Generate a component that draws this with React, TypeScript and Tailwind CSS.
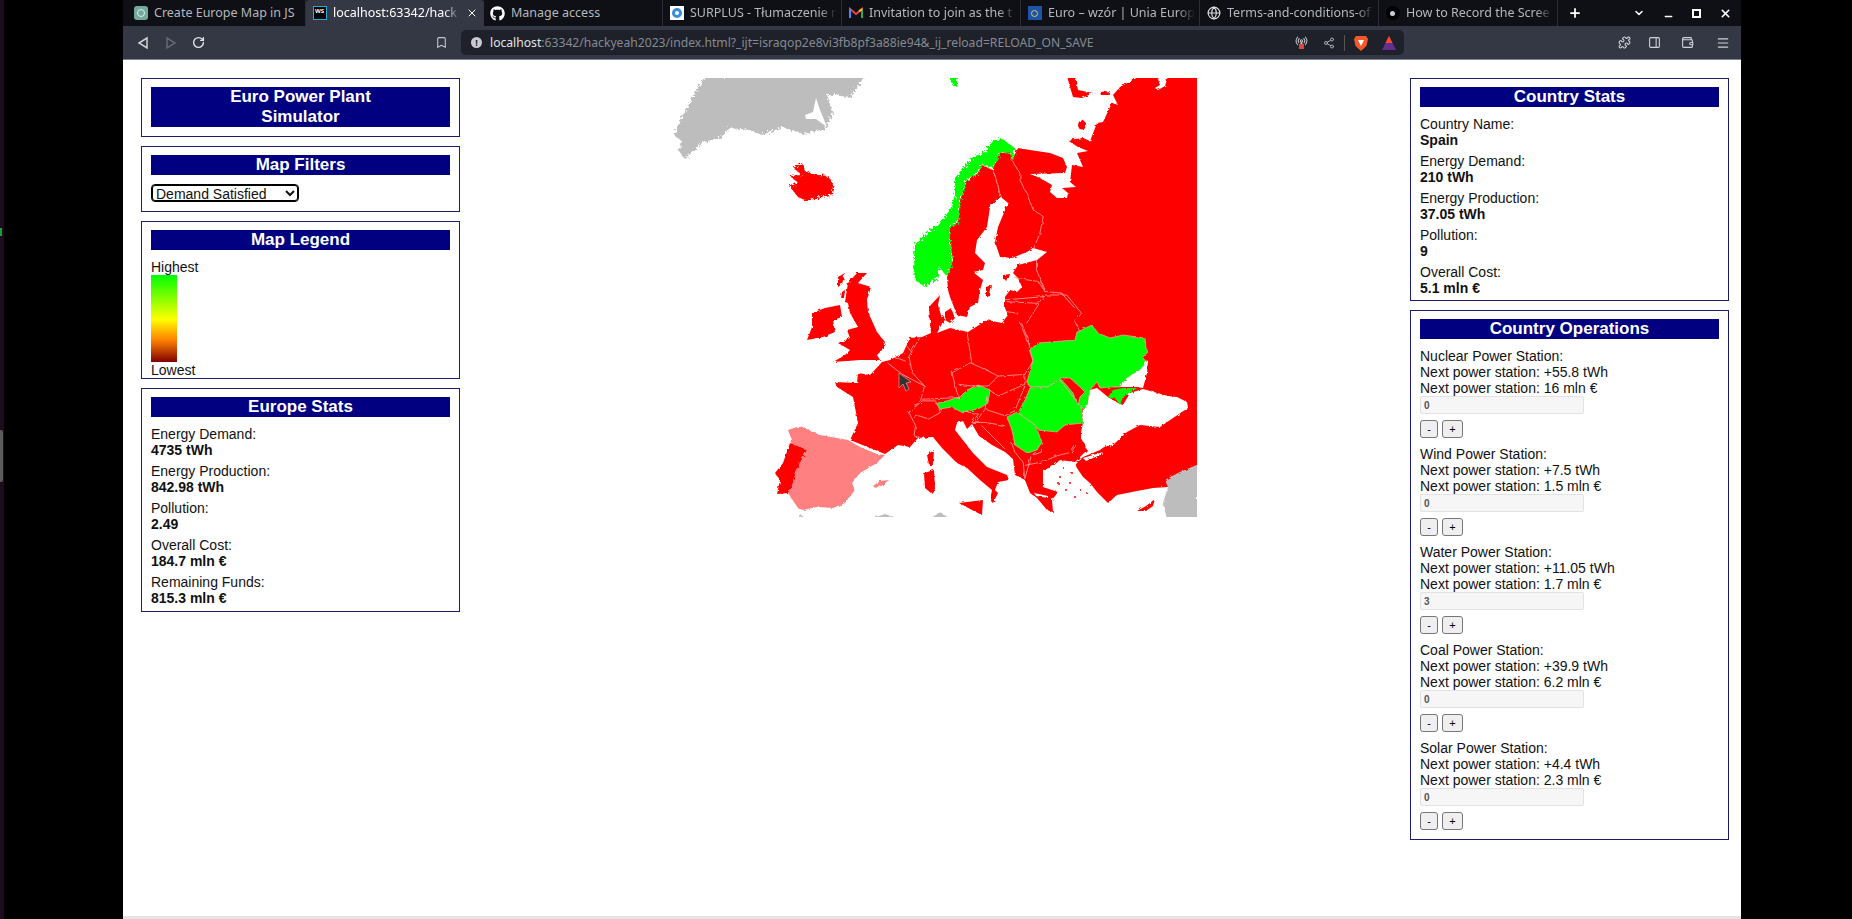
import { FaGithub } from 'react-icons/fa';
import { Globe, Plus, X, ChevronDown, Minus, RotateCw, Bookmark, Share2, Puzzle, Menu, Wallet, PanelRight, RadioTower } from 'lucide-react';

const MAP_FONT = "font-['Liberation_Sans',sans-serif]";
const LINE = '#ffa8a8';

function ChatIcon() {
  return (
    <div className="w-[14px] h-[14px] rounded-[3px] bg-[#74aa9c] flex items-center justify-center">
      <div className="w-[8px] h-[8px] rounded-full border border-[#dff0ea]" />
    </div>
  );
}
function WsIcon() {
  return (
    <div className="w-[14px] h-[14px] bg-black border border-[#25a9e0] text-white text-[6px] leading-[8px] font-bold text-center">
      WS
    </div>
  );
}
function PinIcon() {
  return (
    <div className="w-[14px] h-[14px] bg-white flex items-center justify-center">
      <div className="w-[10px] h-[10px] rounded-full border-[3px] border-[#3b8fd6]" />
    </div>
  );
}
function GmailIcon() {
  return (
    <svg width="14" height="12" viewBox="0 0 14 12">
      <path d="M1 11V2l6 5 6-5v9" fill="none" stroke="#e8453c" strokeWidth="2" />
      <path d="M1 11V2" stroke="#4a8af4" strokeWidth="2" />
      <path d="M13 11V2" stroke="#34a853" strokeWidth="2" />
      <path d="M10 4.500l3-2.500" stroke="#f9bb2d" strokeWidth="2" />
    </svg>
  );
}
function EuIcon() {
  return (
    <div className="w-[14px] h-[14px] bg-[#1c55a8] flex items-center justify-center">
      <div className="w-[7px] h-[7px] rounded-full border border-[#e6c84a]" />
    </div>
  );
}
function DotIcon() {
  return (
    <div className="w-[14px] h-[14px] rounded-full bg-black flex items-center justify-center">
      <div className="w-[5px] h-[5px] rounded-full bg-[#ccc]" />
    </div>
  );
}

const TABS = [
  { title: 'Create Europe Map in JS', icon: <ChatIcon /> },
  { title: 'localhost:63342/hack', icon: <WsIcon />, active: true, fade: true },
  { title: 'Manage access', icon: <FaGithub className="w-[15px] h-[15px] text-white" /> },
  { title: 'SURPLUS - Tłumaczenie n', icon: <PinIcon />, fade: true },
  { title: 'Invitation to join as the t', icon: <GmailIcon />, fade: true },
  { title: 'Euro – wzór | Unia Europ', icon: <EuIcon />, fade: true },
  { title: 'Terms-and-conditions-of', icon: <Globe className="w-[14px] h-[14px] text-[#ddd]" />, fade: true },
  { title: 'How to Record the Scree', icon: <DotIcon />, fade: true },
];

function BrowserChrome() {
  return (
    <div className="shrink-0 font-['Noto_Sans',sans-serif]">
      <div className="h-[26px] bg-[#0e1015] flex items-end pl-[4px] pr-[9px] text-[12.500px] text-[#b4b7bd]">
        {TABS.map((t) => (
          <div
            key={t.title}
            className={
              t.active
                ? 'w-[178px] h-[26px] shrink-0 bg-[#343844] text-white flex items-center gap-[6px] pl-[6px] pr-[6px] rounded-t-[3px]'
                : 'w-[179px] h-[26px] shrink-0 flex items-center gap-[6px] pl-[6px] pr-[4px] border-r border-[#2c2f38]'
            }
          >
            <span className="w-[15px] flex justify-center shrink-0">{t.icon}</span>
            <span
              className={
                t.fade
                  ? 'flex-1 overflow-hidden whitespace-nowrap [mask-image:linear-gradient(to_right,black_88%,transparent)]'
                  : 'flex-1 overflow-hidden whitespace-nowrap'
              }
            >
              {t.title}
            </span>
            {t.active && <X className="w-[12px] h-[12px] text-white shrink-0" />}
          </div>
        ))}
        <div className="h-[26px] flex items-center ml-[10px]">
          <Plus className="w-[14px] h-[14px] text-white" strokeWidth={3} />
        </div>
        <div className="h-[26px] flex-1 flex items-center justify-end gap-[18px] text-white">
          <ChevronDown className="w-[12px] h-[12px]" strokeWidth={3} />
          <Minus className="w-[11px] h-[11px] translate-y-[3px]" strokeWidth={3} />
          <div className="w-[9px] h-[9px] border-2 border-white" />
          <X className="w-[13px] h-[13px]" strokeWidth={3} />
        </div>
      </div>

      <div className="h-[34px] bg-[#343844] flex items-center text-[#c4c7cc] border-b border-[#7d8590]">
        <div className="w-[312px] shrink-0 flex items-center pl-[13px] gap-[14px]">
          <svg width="14" height="14" viewBox="0 0 14 14">
            <path d="M11 2L3 7l8 5z" fill="none" stroke="#d0d3d8" strokeWidth="1.500" />
          </svg>
          <svg width="14" height="14" viewBox="0 0 14 14">
            <path d="M3 2l8 5-8 5z" fill="none" stroke="#636873" strokeWidth="1.500" />
          </svg>
          <RotateCw className="w-[13px] h-[13px] text-[#e4e6e9]" strokeWidth={2.500} />
        </div>
        <Bookmark className="w-[13px] h-[13px] shrink-0 text-[#c4c7cc]" />
        <div className="ml-[13px] w-[943px] shrink-0 h-[25px] bg-[#1e2129] rounded-[5px] flex items-center pl-[10px] pr-[8px] text-[12.150px]">
          <div className="w-[11px] h-[11px] rounded-full bg-[#c8cbd0] text-[#1e2129] text-[9px] leading-[11px] text-center font-bold">
            !
          </div>
          <span className="ml-[8px] text-[#e2e4e8] translate-y-[1px]">localhost</span>
          <span className="text-[#858a94] translate-y-[1px]">:63342/hackyeah2023/index.html?_ijt=israqop2e8vi3fb8pf3a88ie94&_ij_reload=RELOAD_ON_SAVE</span>
          <div className="flex-1" />
          <div className="relative">
            <RadioTower className="w-[13px] h-[13px] text-[#b9bcc2]" />
            <div className="absolute left-[4px] bottom-0 w-[5px] h-[5px] bg-[#e0443e]" />
          </div>
          <Share2 className="w-[12px] h-[12px] ml-[15px] text-[#a8abb2]" />
          <div className="w-px h-[16px] bg-[#555] ml-[9px]" />
          <svg width="14" height="16" viewBox="0 0 14 16" className="ml-[9px]">
            <path d="M2 1h10l2 3-1.500 7L7 16 1.500 11 0 4z" fill="#f1592a" />
            <path d="M4 5h6L7 11z" fill="#fff" />
          </svg>
          <svg width="14" height="14" viewBox="0 0 14 14" className="ml-[14px]">
            <path d="M7 0l7 14H0z" fill="#662d91" />
            <path d="M7 0l3.500 7h-7z" fill="#ff4724" />
          </svg>
        </div>
        <div className="flex-1 flex items-center pl-[214px] gap-[17px] text-[#d0d3d8]">
          <Puzzle className="w-[13px] h-[13px] shrink-0" />
          <PanelRight className="w-[13px] h-[13px] shrink-0" />
          <Wallet className="w-[13px] h-[13px] ml-[3px] shrink-0" />
          <Menu className="w-[14px] h-[14px] ml-[5px] shrink-0" />
        </div>
      </div>
    </div>
  );
}

const GREEK_ISLANDS: [number, number][] = [
  [1060, 477], [1070, 483], [1080, 490], [1087, 493], [1063, 468], [1066, 490], [1075, 497], [1058, 483], [1091, 486], [1072, 473],
];

function EuropeMap() {
  return (
    <svg width="537" height="439" viewBox="660 78 537 439" className="shrink-0">
      <defs>
        <filter id="coast" x="0" y="0" width="100%" height="100%">
          <feTurbulence type="fractalNoise" baseFrequency="0.28" numOctaves="2" seed="4" result="n" />
          <feDisplacementMap in="SourceGraphic" in2="n" scale="3" />
          <feGaussianBlur stdDeviation="0.3" />
        </filter>
        <filter id="rough" x="0" y="0" width="100%" height="100%">
          <feTurbulence type="fractalNoise" baseFrequency="0.45" numOctaves="2" seed="9" result="n" />
          <feDisplacementMap in="SourceGraphic" in2="n" scale="7" />
          <feGaussianBlur stdDeviation="0.3" />
        </filter>
        <filter id="wiggle" x="-5%" y="-5%" width="110%" height="110%">
          <feTurbulence type="fractalNoise" baseFrequency="0.06" numOctaves="2" seed="3" result="n" />
          <feDisplacementMap in="SourceGraphic" in2="n" scale="10" />
        </filter>
      </defs>

      <g filter="url(#rough)">
        <path
          fill="#bdbdbd"
          d="M705 76H865L860 83 850 98 838 95 827 95 833 113 826 127 825 129 803 134 783 127 762 135 750 130 730 128 720 138 703 142 685 159 678 150 683 142 674 135 682 117 693 97Z"
        />
        <path
          fill="#ff0000"
          d="M802 163L806 172 817 175 829 176 834 187 833 194 817 198 807 201 798 197 790 187 798 182 789 176 802 175 793 168Z"
        />
      </g>
      <path fill="#ffffff" d="M805 115L813 112 816 98 820 110 827 127 816 119 806 119Z" />

      <g filter="url(#coast)">
        {/* grey neighbours */}
        <path fill="#bdbdbd" d="M1197 280L1190 292 1184 303 1193 305 1187 313 1197 328Z" />
        <path fill="#bdbdbd" d="M1168 396L1197 390V408L1188 413 1187 402Z" />
        <path fill="#bdbdbd" d="M1197 462L1180 472 1165 480 1168 487 1163 503 1167 519H1197Z" />
        <path fill="#bdbdbd" d="M1008 315L1018 313 1019 322 1002 323Z" />
        <path fill="#bdbdbd" d="M798 519L800 514 806 519ZM870 519L885 514 900 519ZM930 519L940 512 950 519Z" />

        {/* Russia, Finland, mainland */}
        <path
          fill="#ff0000"
          d="M1012 160L1018 148 1030 150 1050 153 1063 158 1067 167 1065 173 1030 174 1040 178 1052 185 1050 192 1057 198 1067 198 1068 193 1062 188 1076 187 1070 182 1072 165 1083 167 1077 153 1088 151 1078 147 1067 140 1083 138 1090 141 1097 123 1103 122 1112 103 1118 105 1113 95 1120 87 1140 76H1199V420L1120 420 1085 445 1087 450 1082 455 1075 462 1060 460 1052 467 1043 470 1043 487 1058 492 1052 500 1053 512 1047 510 1037 498 1030 493 1025 480 1015 475 1013 459 1005 452 992 445 979 436 972 424 967 429 963 421 957 423 955 430 973 453 987 467 1007 475 1009 480 998 482 995 490 998 493 993 503 990 500 992 490 980 480 967 468 957 463 942 448 933 437 918 438 910 447 898 445 885 454 850 440 858 423 853 397 837 387 835 382 857 383 858 373 870 375 882 362 890 360 903 353 910 338 922 337 931 333 930 323 929 307 940 295 938 305 943 322 937 333 950 328 968 332 987 320 1002 323 1008 315 1005 308 1005 297 1010 290 1017 292 1022 287 1018 278 1013 273 1018 265 1037 260 1047 252 1033 248 1027 252 1012 258 1000 257 995 242 998 227 1008 203 1002 198 998 187 993 170 993 168 1000 153 1010 152Z"
        />
        {/* arctic islands */}
        <path fill="#ff0000" d="M1067 76H1075L1078 90 1093 93 1082 98 1073 97 1070 87ZM1100 92L1110 91 1108 95 1101 95Z" />
        <ellipse cx="1082" cy="125" rx="4" ry="4.500" fill="#ff0000" />
        <path fill="#ffffff" d="M1157 76H1168L1165 86 1158 90 1155 88 1160 85Z" />

        {/* Sweden */}
        <path
          fill="#ff0000"
          d="M982 165L978 173 967 180 960 200 958 222 950 227 950 243 953 260 947 277 948 290 950 297 957 315 967 317 970 307 978 303 980 290 983 280 973 272 983 270 985 263 975 253 977 240 987 227 990 207 998 198 1001 197 998 187 993 170Z"
        />
        <path fill="#ff0000" d="M986 287L992 285 990 296 986 297Z" />
        {/* Denmark and Estonian islands */}
        <path fill="#ff0000" d="M945 312L951 308 955 318 950 323 945 320Z" />
        <path fill="#ff0000" d="M940 318L944 316 945 323 941 324Z" />
        <path fill="#ff0000" d="M1003 275L1010 274 1008 280 1003 279Z" />

        {/* Turkey */}
        <path
          fill="#ff0000"
          d="M1075 465L1083 457 1100 450 1140 420 1199 405V464L1180 472 1165 480 1168 487 1153 488 1137 491 1117 495 1108 503 1097 492 1090 483 1083 477Z"
        />
        <path fill="#ffffff" d="M1083 458L1103 452 1100 455 1086 461Z" />

        {/* Black sea */}
        <path
          fill="#ffffff"
          d="M1080 437L1087 448 1102 447 1113 445 1127 432 1140 425 1160 427 1173 418 1188 408 1187 402 1177 397 1168 396 1143 389 1130 393 1123 405 1118 403 1108 397 1097 388 1090 390 1087 403 1083 410 1083 423Z"
        />

        {/* islands */}
        <path
          fill="#ff0000"
          d="M857 273L867 273 858 283 871 287 867 300 868 312 877 332 885 342 882 350 877 355 880 360 860 360 833 362 845 355 850 350 838 343 850 338 847 330 858 327 850 313 848 303 845 302 848 283Z"
        />
        <path fill="#ff0000" d="M838 277L845 273 842 284 838 287ZM842 292L845 290 844 298 841 298Z" />
        <path
          fill="#ff0000"
          d="M812 313L825 308 840 305 842 317 833 320 835 332 823 337 807 340 812 327Z"
        />
        <path fill="#ff0000" d="M959 503L983 500 982 515 972 510Z" />
        <path fill="#ff0000" d="M924 473L934 470 935 489 931 493 925 488Z" />
        <path fill="#ff0000" d="M927 455L934 450 933 465 929 465Z" />
        <path fill="#ff0000" d="M1137 511L1146 506 1155 499 1153 506 1146 511Z" />
        {GREEK_ISLANDS.map(([cx, cy]) => (
          <circle key={`${cx}-${cy}`} cx={cx} cy={cy} r="1" fill="#ff0000" />
        ))}
        <path fill="#ffffff" d="M1034 493L1048 496 1048 498 1036 496Z" />

        {/* Spain and Portugal */}
        <path
          fill="#ff8080"
          d="M788 430L800 426 820 435 848 440 860 447 877 454 885 455 877 463 860 473 852 483 855 490 845 503 833 508 817 507 803 510 798 508 788 493 793 483 795 472 807 450 790 447 792 440Z"
        />
        <path fill="#ff8080" d="M873 486L880 481 889 480 884 484 877 489Z" />
        <path fill="#ff0000" d="M790 443L807 450 795 472 793 483 788 493 777 494 780 480 775 473 783 463Z" />
      </g>

      <g filter="url(#rough)">
        <path
          fill="#00ff00"
          d="M1015 148L1002 139 993 141 985 152 973 157 963 168 955 178 955 195 950 210 940 223 927 233 915 245 913 267 915 280 925 287 937 278 940 268 947 277 953 260 950 243 950 227 958 222 960 200 967 180 978 173 982 165 993 168 1000 153 1010 152 1012 160Z"
        />
        <path fill="#00ff00" d="M949 76H957L957 85 954 87 951 82Z" />
      </g>

      <g filter="url(#coast)" stroke={LINE} strokeWidth="0.700">
        <path
          fill="#00ff00"
          d="M1030 350L1038 343 1075 340 1077 332 1092 325 1098 333 1110 338 1123 335 1145 338 1146 348 1148 352 1142 358 1148 362 1140 370 1127 378 1120 387 1110 387 1100 388 1097 382 1090 390 1087 407 1082 408 1060 380 1047 387 1030 387 1027 382 1033 360Z"
        />
        <path fill="#ffffff" stroke="none" d="M1148 360L1140 370 1127 378 1120 387 1137 387 1143 388 1147 373Z" />
        <path fill="#00ff00" stroke="none" d="M1108 397L1113 390 1123 388 1137 388 1130 393 1123 397 1120 405 1115 398Z" />
        <path
          fill="#00ff00"
          d="M1030 388L1047 387 1060 380 1082 408 1083 423 1065 425 1057 432 1038 430 1035 425 1018 413 1025 400Z"
        />
        <path fill="#ff0000" d="M1060 378L1070 378 1080 387 1085 392 1080 397 1078 405 1073 393 1068 387Z" />
        <path
          fill="#00ff00"
          d="M1007 417L1017 412 1035 425 1038 432 1042 442 1037 450 1027 453 1015 445 1012 430Z"
        />
        <path
          fill="#00ff00"
          d="M937 403L943 402 960 397 967 390 978 385 990 390 988 403 980 408 963 413 952 407 940 409Z"
        />
      </g>

      {/* borders */}
      <g fill="none" stroke={LINE} strokeWidth="2.400" transform="translate(760 290) scale(0.331)" filter="url(#wiggle)">
        <path d="M385 220L430 255 497 290 485 335 450 370 470 410 465 440 490 450" />
        <path d="M485 140L450 200 460 250 497 290" />
        <path d="M450 370L490 335 530 335 545 370 510 390 480 380 465 385" />
        <path d="M490 330L600 325 590 290 580 250 635 220" />
        <path d="M625 125L635 190 640 220" />
        <path d="M635 220L680 240 720 260 690 290 640 290 600 285" />
        <path d="M720 260L800 255 800 285 720 320 690 300" />
        <path d="M685 320L680 360 740 380 770 365 800 290" />
        <path d="M790 100L810 150 815 185 825 215 800 255" />
        <path d="M610 365L660 375 640 400 680 400 740 410" />
        <path d="M680 360L650 400" />
        <path d="M670 410L740 480" />
        <path d="M760 460L770 490 795 520 800 570 820 500 850 490 850 480" />
        <path d="M800 530L850 520 900 500 940 490 960 460" />
        <path d="M440 165L460 190M400 200L440 215" />
      </g>
      <g fill="none" stroke={LINE} strokeWidth="2.400" transform="translate(980 290) scale(0.333)" filter="url(#wiggle)">
        <path d="M80 35L175 40 195 15 260 15 305 70 285 95 300 125" />
        <path d="M118 95L150 170" />
        <path d="M178 40L140 100" />
        <path d="M80 65L115 70" />
      </g>
      <g fill="none" stroke={LINE} strokeWidth="2.400" transform="translate(930 70) scale(0.333)" filter="url(#wiggle)">
        <path d="M245 270L270 310 270 330 290 370 310 420 340 440 330 490 310 540" />
        <path d="M155 285L190 300 205 350 212 382" />
        <path d="M320 570L320 600 345 665 395 670 435 715" />
        <path d="M225 690L290 685 345 680" />
        <path d="M255 625L325 635 345 665" />
      </g>

      {/* mouse cursor */}
      <path d="M899 373V388L903 384 906 391 909 389 906 383 911 382Z" fill="#333" stroke="#ddd" strokeWidth="0.500" />
    </svg>
  );
}

function Panel({ title, className, children }: { title: React.ReactNode; className?: string; children?: React.ReactNode }) {
  return (
    <div className={`border border-[#1c1c6e] bg-white px-[9px] pt-[8px] ${className ?? 'pb-[9px]'}`}>
      <div className="bg-[#000080] text-white font-bold text-[17px] leading-[20px] text-center">{title}</div>
      {children}
    </div>
  );
}

function StatList({ items }: { items: [string, string][] }) {
  return (
    <div className="mt-[9px] flex flex-col gap-[5px]">
      {items.map(([label, value]) => (
        <div key={label} className="leading-[16px]">
          <div>{label}</div>
          <div className="font-bold">{value}</div>
        </div>
      ))}
    </div>
  );
}

const EUROPE_STATS: [string, string][] = [
  ['Energy Demand:', '4735 tWh'],
  ['Energy Production:', '842.98 tWh'],
  ['Pollution:', '2.49'],
  ['Overall Cost:', '184.7 mln €'],
  ['Remaining Funds:', '815.3 mln €'],
];

const COUNTRY_STATS: [string, string][] = [
  ['Country Name:', 'Spain'],
  ['Energy Demand:', '210 tWh'],
  ['Energy Production:', '37.05 tWh'],
  ['Pollution:', '9'],
  ['Overall Cost:', '5.1 mln €'],
];

const STATIONS = [
  { name: 'Nuclear', twh: '+55.8 tWh', cost: '16 mln €', count: 0 },
  { name: 'Wind', twh: '+7.5 tWh', cost: '1.5 mln €', count: 0 },
  { name: 'Water', twh: '+11.05 tWh', cost: '1.7 mln €', count: 3 },
  { name: 'Coal', twh: '+39.9 tWh', cost: '6.2 mln €', count: 0 },
  { name: 'Solar', twh: '+4.4 tWh', cost: '2.3 mln €', count: 0 },
];

const STEP_BTN =
  'h-[18px] bg-[#efefef] border border-[#767676] rounded-[3px] text-[11px] leading-[14px] text-black flex items-center justify-center';

export default function App() {
  return (
    <div className="h-[919px] w-[1852px] bg-black flex overflow-hidden relative">
      {/* desktop edge left of the window */}
      <div className="w-[4px] bg-[#1c0c1c] shrink-0" />
      <div className="absolute left-0 top-[430px] w-[3px] h-[52px] bg-[#5c5c5c] rounded-r-[2px]" />
      <div className="absolute left-0 top-[228px] w-[2px] h-[8px] bg-[#1f9d3a]" />
      <div className="w-[119px] shrink-0" />

      <div className="w-[1618px] shrink-0 flex flex-col">
        <BrowserChrome />
        <div className={`flex-1 bg-white flex items-start pl-[18px] pr-[12px] pt-[18px] text-[14px] text-[#111] ${MAP_FONT}`}>
          <div className="w-[319px] shrink-0 flex flex-col gap-[9px]">
            <Panel title={<>Euro Power Plant<br />Simulator</>} />
            <Panel title="Map Filters">
              <select
                className="mt-[9px] block w-[148px] h-[18px] border border-black shadow-[inset_0_0_0_1px_#000] rounded-[4px] text-[14px] py-0"
                defaultValue="Demand Satisfied"
              >
                <option>Demand Satisfied</option>
              </select>
            </Panel>
            <Panel title="Map Legend" className="pb-0">
              <div className="mt-[9px] leading-[16px]">Highest</div>
              <div className="w-[26px] h-[87px] bg-[linear-gradient(to_bottom,#00ff00,#ffff00_51%,#ff8000_75%,#800000)]" />
              <div className="leading-[16px]">Lowest</div>
            </Panel>
            <Panel title="Europe Stats" className="pb-[5px]">
              <StatList items={EUROPE_STATS} />
            </Panel>
          </div>

          <div className="flex-1 flex justify-center pr-[13px]">
            <EuropeMap />
          </div>

          <div className="w-[319px] shrink-0 flex flex-col gap-[9px]">
            <Panel title="Country Stats" className="pb-[4px]">
              <StatList items={COUNTRY_STATS} />
            </Panel>
            <Panel title="Country Operations">
              <div className="mt-[9px] flex flex-col gap-[8px]">
                {STATIONS.map((s) => (
                  <div key={s.name} className="leading-[16px]">
                    <div>{s.name} Power Station:</div>
                    <div>Next power station: {s.twh}</div>
                    <div>Next power station: {s.cost}</div>
                    <input
                      readOnly
                      value={s.count}
                      className="block w-[164px] h-[18px] bg-[#f6f6f6] border border-[#e2e2e2] rounded-[2px] text-[10px] font-bold text-[#555] pl-[3px]"
                    />
                    <div className="mt-[6px] flex gap-[4px]">
                      <button className={`w-[18px] ${STEP_BTN}`}>-</button>
                      <button className={`w-[21px] ${STEP_BTN}`}>+</button>
                    </div>
                  </div>
                ))}
              </div>
            </Panel>
          </div>
        </div>
        <div className="h-[3px] bg-[#e4e4e4] shrink-0" />
      </div>
    </div>
  );
}
